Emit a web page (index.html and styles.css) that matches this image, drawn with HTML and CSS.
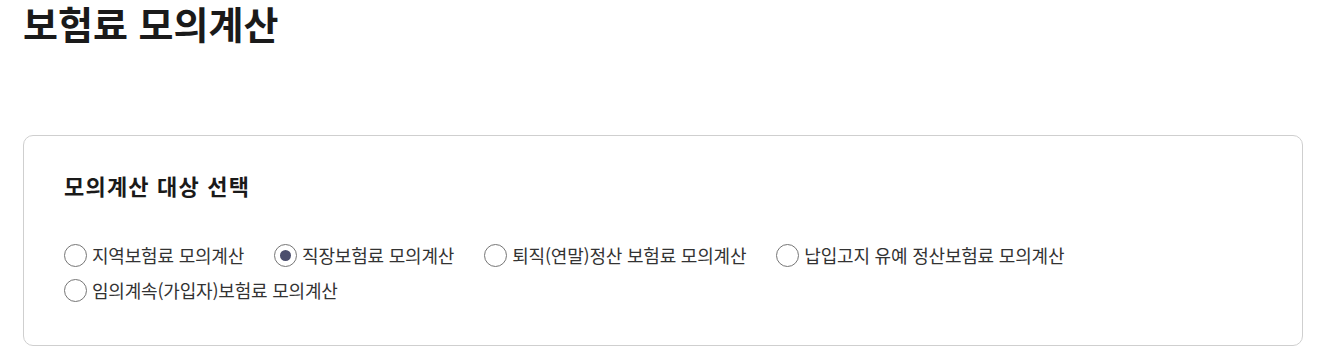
FILE: index.html
```html
<!DOCTYPE html>
<html lang="ko">
<head>
    <meta charset="UTF-8">
    <meta name="viewport" content="width=device-width, initial-scale=1.0">
    <title>보험료 모의계산</title>
    <link rel="stylesheet" href="styles.css">
</head>
<body>
    <div class="page">
        <h1 class="page-title">보험료 모의계산</h1>

        <div class="card">
            <h2 class="card-title">모의계산 대상 선택</h2>
            <div class="radio-list">
                <label class="radio">
                    <input type="radio" name="target" value="region">
                    <span class="radio-mark"></span>
                    <span class="radio-text">지역보험료 모의계산</span>
                </label>
                <label class="radio">
                    <input type="radio" name="target" value="company" checked>
                    <span class="radio-mark"></span>
                    <span class="radio-text">직장보험료 모의계산</span>
                </label>
                <label class="radio">
                    <input type="radio" name="target" value="retire">
                    <span class="radio-mark"></span>
                    <span class="radio-text">퇴직(연말)정산 보험료 모의계산</span>
                </label>
                <label class="radio">
                    <input type="radio" name="target" value="defer">
                    <span class="radio-mark"></span>
                    <span class="radio-text">납입고지 유예 정산보험료 모의계산</span>
                </label>
                <label class="radio">
                    <input type="radio" name="target" value="continue">
                    <span class="radio-mark"></span>
                    <span class="radio-text">임의계속(가입자)보험료 모의계산</span>
                </label>
            </div>
        </div>
    </div>
</body>
</html>
```

FILE: styles.css
```css
body {
    margin: 0;
    font-family: "Noto Sans CJK KR", "Noto Sans", sans-serif;
    color: #222;
    background: #fff;
}
.page {
    width: 1280px;
    padding: 0 23px;
}
.page-title {
    margin: 0;
    font-size: 38px;
    font-weight: 700;
    line-height: 46px;
    color: #1a1a1a;
}
.card {
    margin-top: 89px;
    border: 1px solid #cfcfcf;
    border-radius: 10px;
    padding: 34px 40px 43px;
}
.card-title {
    margin: 0 0 43px;
    font-size: 22px;
    font-weight: 700;
    line-height: 30px;
    letter-spacing: 1.2px;
    color: #1a1a1a;
}
.radio-list {
    display: flex;
    flex-wrap: wrap;
    column-gap: 30px;
    row-gap: 11px;
}
.radio {
    display: flex;
    align-items: center;
    gap: 5px;
    height: 24px;
    cursor: pointer;
}
.radio input {
    display: none;
}
.radio-mark {
    width: 21px;
    height: 21px;
    border: 1.5px solid #767676;
    border-radius: 50%;
    display: flex;
    align-items: center;
    justify-content: center;
}
.radio input:checked + .radio-mark::after {
    content: "";
    width: 11px;
    height: 11px;
    border-radius: 50%;
    background: #4b4e6d;
}
.radio-text {
    font-size: 18px;
    letter-spacing: -0.2px;
    color: #333;
}
```
